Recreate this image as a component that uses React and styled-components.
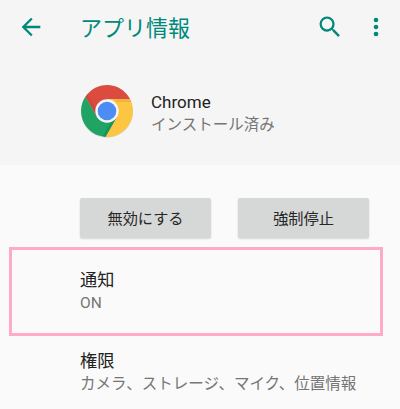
import React from 'react';
import styled, { createGlobalStyle } from 'styled-components';

const Global = createGlobalStyle`
    html, body {
        margin: 0;
        padding: 0;
        background: #fafafa;
        font-family: Roboto, "Noto Sans CJK JP", sans-serif;
    }
`

const Page = styled.div`
    width: 400px;
    height: 409px;
    overflow: hidden;
    background: #fafafa;
`

const Header = styled.div`
    height: 165px;
    background: #f5f5f5;
    display: flex;
    flex-direction: column;
`

const Toolbar = styled.div`
    height: 54px;
    display: flex;
    align-items: center;
    padding: 0 10px 0 17px;
    color: #00897b;
`

const Title = styled.div`
    flex: 1;
    margin: 0 0 3px 35px;
    font-size: 22px;
`

const IconSlot = styled.div`
    width: 28px;
    height: 28px;
    margin-left: ${props => props.gap || 0}px;
`

const AppRow = styled.div`
    display: flex;
    align-items: center;
    padding: 31px 0 0 81px;
`

const AppText = styled.div`
    margin: 2px 0 0 18px;
    display: flex;
    flex-direction: column;
`

const AppName = styled.div`
    font-size: 17px;
    line-height: 23px;
    color: #212121;
`

const AppState = styled.div`
    font-size: 15.5px;
    line-height: 22px;
    color: #757575;
`

const Buttons = styled.div`
    display: flex;
    gap: 27px;
    padding: 33px 0 0 80px;
`

const Button = styled.div`
    box-sizing: border-box;
    width: 131px;
    height: 40px;
    padding-bottom: 2px;
    border-radius: 2px;
    background: #d6d7d7;
    box-shadow: 0 1px 2px rgba(0, 0, 0, 0.15);
    display: flex;
    align-items: center;
    justify-content: center;
    font-size: 15.2px;
    color: #262626;
`

const Row = styled.div`
    box-sizing: border-box;
    width: ${props => props.highlight ? '374px' : 'auto'};
    height: ${props => props.highlight ? '89px' : 'auto'};
    margin: ${props => props.highlight ? '9px 0 0 9px' : '0'};
    padding: ${props => props.highlight ? '18px 0 0 68px' : '13px 0 0 80px'};
    border: ${props => props.highlight ? '3px solid #ffabc8' : 'none'};
`

const RowTitle = styled.div`
    font-size: 17.2px;
    line-height: 24px;
    color: #212121;
`

const RowSub = styled.div`
    font-size: 15.5px;
    line-height: 22px;
    color: #757575;
    white-space: nowrap;
`

const ChromeLogo = () => (
    <svg width="52" height="54" viewBox="0 0 52 54">
        <circle cx="26" cy="26.8" r="26" fill="#000" opacity="0.12" />
        <path d="M4.3 11.75A26 26 0 0 1 49.2 14.3L26 14.3L15.9 31.85Z" fill="#db4c3f" />
        <path d="M49.2 14.3A26 26 0 0 1 24.5 51.9L36.1 31.85L26 14.3Z" fill="#fdc642" />
        <path d="M24.5 51.9A26 26 0 0 1 4.3 11.75L15.9 31.85L36.1 31.85Z" fill="#1fa463" />
        <path d="M32 14.3H49.2L50.4 17L37 17Z" fill="#e8a33a" opacity="0.55" />
        <path d="M4.3 11.75L15.9 31.85L18 31L6.5 9Z" fill="#a8392f" opacity="0.25" />
        <path d="M24.5 51.9L36.1 31.85L33 32L21.5 51.6Z" fill="#0f7a45" opacity="0.35" />
        <circle cx="26" cy="26" r="11.7" fill="#f5f5f5" />
        <circle cx="26" cy="26" r="9.3" fill="#4e8cf5" />
    </svg>
)

const BackIcon = () => (
    <svg width="28" height="28" viewBox="0 0 24 24" fill="currentColor">
        <path d="M20 11H7.83l5.59-5.59L12 4l-8 8 8 8 1.41-1.41L7.83 13H20v-2z" />
    </svg>
)

const SearchIcon = () => (
    <svg width="28" height="28" viewBox="0 0 24 24" fill="currentColor">
        <path d="M15.5 14h-.79l-.28-.27A6.47 6.47 0 0 0 16 9.5 6.5 6.5 0 1 0 9.5 16c1.61 0 3.09-.59 4.23-1.57l.27.28v.79l5 4.99L20.49 19l-4.99-5zm-6 0C7.01 14 5 11.99 5 9.5S7.01 5 9.5 5 14 7.01 14 9.5 11.99 14 9.5 14z" />
    </svg>
)

const MoreIcon = () => (
    <svg width="28" height="28" viewBox="0 0 24 24" fill="currentColor">
        <circle cx="12" cy="6" r="2" />
        <circle cx="12" cy="12" r="2" />
        <circle cx="12" cy="18" r="2" />
    </svg>
)

const App = () => {
    return <Page>
        <Global />
        <Header>
            <Toolbar>
                <BackIcon />
                <Title>アプリ情報</Title>
                <IconSlot><SearchIcon /></IconSlot>
                <IconSlot gap={18}><MoreIcon /></IconSlot>
            </Toolbar>
            <AppRow>
                <ChromeLogo />
                <AppText>
                    <AppName>Chrome</AppName>
                    <AppState>インストール済み</AppState>
                </AppText>
            </AppRow>
        </Header>
        <Buttons>
            <Button>無効にする</Button>
            <Button>強制停止</Button>
        </Buttons>
        <Row highlight>
            <RowTitle>通知</RowTitle>
            <RowSub>ON</RowSub>
        </Row>
        <Row>
            <RowTitle>権限</RowTitle>
            <RowSub>カメラ、ストレージ、マイク、位置情報</RowSub>
        </Row>
    </Page>
}

export default App;
